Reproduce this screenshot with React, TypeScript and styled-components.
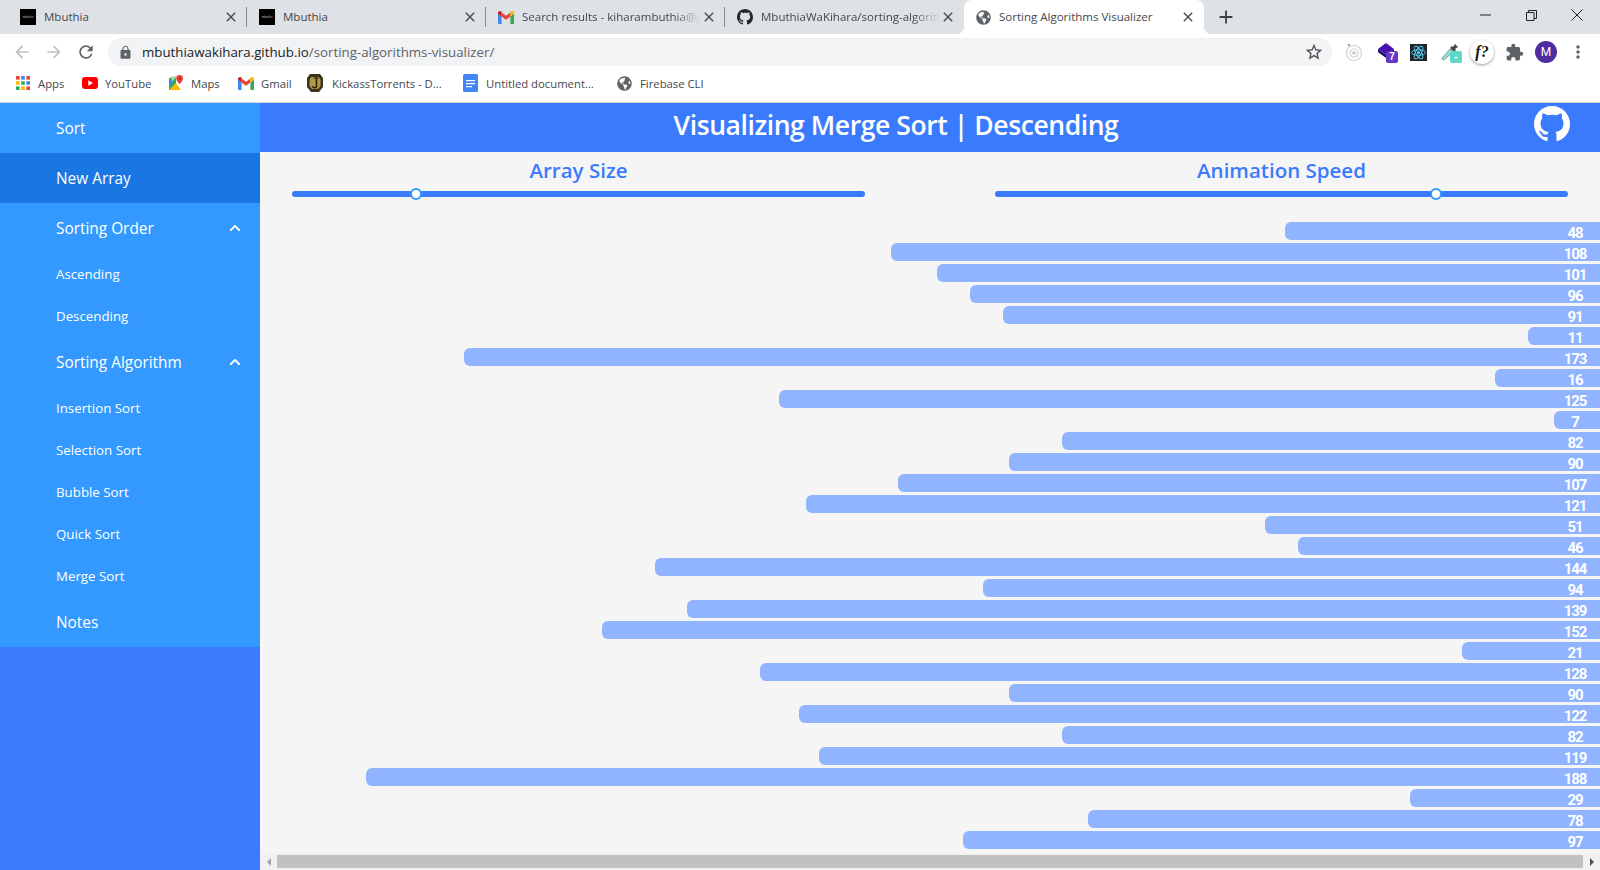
import React from 'react';
import styled, { createGlobalStyle } from 'styled-components';
import { MdArrowBack, MdArrowForward, MdRefresh, MdLock, MdClose, MdAdd, MdMoreVert, MdExtension, MdStarBorder } from 'react-icons/md';
import { FaGlobeAmericas, FaChevronUp } from 'react-icons/fa';

const GITHUB_PATH = 'M8 0C3.58 0 0 3.58 0 8c0 3.54 2.29 6.53 5.47 7.59.4.07.55-.17.55-.38 0-.19-.01-.82-.01-1.49-2.01.37-2.53-.49-2.69-.94-.09-.23-.48-.94-.82-1.13-.28-.15-.68-.52-.01-.53.63-.01 1.08.58 1.23.82.72 1.21 1.87.87 2.33.66.07-.52.28-.87.51-1.07-1.78-.2-3.64-.89-3.64-3.95 0-.87.31-1.59.82-2.15-.08-.2-.36-1.02.08-2.12 0 0 .67-.21 2.2.82.64-.18 1.32-.27 2-.27.68 0 1.36.09 2 .27 1.53-1.04 2.2-.82 2.2-.82.44 1.1.16 1.92.08 2.12.51.56.82 1.27.82 2.15 0 3.07-1.87 3.75-3.65 3.95.29.25.54.73.54 1.48 0 1.07-.01 1.93-.01 2.2 0 .21.15.46.55.38A8.013 8.013 0 0016 8c0-4.42-3.58-8-8-8z';

const UI_FONT = '"Open Sans", "Noto Sans", sans-serif';

const Global = createGlobalStyle`
  html, body { margin: 0; padding: 0; height: 100%; overflow: hidden; background: #fff; }
  * { box-sizing: border-box; }
  #root { height: 870px; width: 1600px; }
`;

const Page = styled.div`
  width: 1600px;
  height: 870px;
  display: flex;
  flex-direction: column;
  overflow: hidden;
  font-family: ${UI_FONT};
`;

/* ---------- browser chrome ---------- */
const TabStrip = styled.div`
  height: 34px;
  flex: none;
  background: #dee1e6;
  display: flex;
  align-items: stretch;
  padding-left: 8px;
`;
const Tab = styled.div<{ $active?: boolean; $w?: number }>`
  position: relative;
  width: ${p => p.$w ?? 239}px;
  display: flex;
  align-items: center;
  padding: 0 8px 0 12px;
  background: ${p => (p.$active ? '#fff' : 'transparent')};
  border-radius: ${p => (p.$active ? '8px 8px 0 0' : '0')};
  ${p =>
    p.$active
      ? `
    &::before, &::after {
      content: '';
      position: absolute;
      bottom: 0;
      width: 8px;
      height: 8px;
    }
    &::before { left: -8px; background: radial-gradient(circle at 0 0, transparent 8px, #fff 8.5px); }
    &::after { right: -8px; background: radial-gradient(circle at 100% 0, transparent 8px, #fff 8.5px); }
  `
      : ''}
`;
const TabDivider = styled.span`
  position: absolute;
  right: 0;
  top: 7px;
  bottom: 7px;
  width: 1px;
  background: #888a8e;
`;
const TabTitle = styled.span<{ $fade?: boolean }>`
  flex: 1;
  min-width: 0;
  margin: 0 0 2px 8px;
  font-size: 11.5px;
  color: #45474a;
  white-space: nowrap;
  overflow: hidden;
  ${p => (p.$fade ? 'mask-image: linear-gradient(to right, #000 85%, transparent 100%);' : '')}
`;
const TabClose = styled.span`
  width: 16px;
  height: 16px;
  flex: none;
  display: flex;
  align-items: center;
  justify-content: center;
  color: #45474a;
  font-size: 16px;
`;
const BlackFavicon = styled.span`
  width: 16px;
  height: 16px;
  flex: none;
  background: #000;
  color: #bbb;
  font: 3px/16px "Liberation Sans", sans-serif;
  text-align: center;
  overflow: hidden;
`;
const NewTab = styled.span`
  width: 22px;
  margin-left: 11px;
  display: flex;
  align-items: center;
  justify-content: center;
  color: #3c4043;
  font-size: 22px;
`;
const WindowControls = styled.div`
  margin-left: auto;
  display: flex;
  align-items: flex-start;
  color: #222;
`;
const WindowButton = styled.span`
  width: 46px;
  height: 30px;
  display: flex;
  align-items: center;
  justify-content: center;
`;

const Toolbar = styled.div`
  height: 34px;
  flex: none;
  padding: 4px 6px 0 0;
  display: flex;
  align-items: flex-start;
  background: #fff;
`;
const NavGroup = styled.div`
  width: 108px;
  height: 28px;
  flex: none;
  padding-left: 6px;
  display: flex;
  align-items: center;
`;
const NavButton = styled.span<{ $dim?: boolean }>`
  width: 32px;
  display: flex;
  align-items: center;
  justify-content: center;
  font-size: 20px;
  color: ${p => (p.$dim ? '#bfc1c3' : '#5f6368')};
`;
const Omnibox = styled.div`
  width: 1224px;
  height: 28px;
  flex: none;
  border-radius: 14px;
  background: #f1f3f4;
  display: flex;
  align-items: center;
  padding: 0 7px 0 10px;
`;
const LockSlot = styled.span`
  width: 24px;
  flex: none;
  color: #5f6368;
  font-size: 15px;
  display: flex;
  align-items: center;
`;
const Url = styled.span`
  flex: 1;
  font-size: 13.3px;
  color: #5f6368;
  white-space: nowrap;
`;
const UrlHost = styled.span`
  color: #202124;
`;
const StarSlot = styled.span`
  width: 22px;
  color: #4d5054;
  font-size: 20px;
  display: flex;
  align-items: center;
  justify-content: center;
`;
const Extensions = styled.div`
  margin-left: auto;
  display: flex;
  height: 28px;
`;
const ExtSlot = styled.span`
  position: relative;
  width: 32px;
  height: 28px;
  display: flex;
  align-items: center;
  justify-content: center;
  color: #5f6368;
`;
const ExtBadge = styled.span<{ $bg: string }>`
  position: absolute;
  left: 16px;
  top: 13px;
  width: 12px;
  height: 12px;
  border-radius: 2px;
  background: ${p => p.$bg};
  color: #fff;
  font: bold 10px/12px "Liberation Sans", sans-serif;
  text-align: center;
`;
const FunctionBubble = styled.span`
  width: 24px;
  height: 24px;
  border-radius: 50%;
  background: #fff;
  box-shadow: 0 1px 3px rgba(0, 0, 0, 0.4);
  color: #111;
  font: italic bold 16px/24px "Liberation Serif", serif;
  text-align: center;
`;
const Avatar = styled.span`
  width: 22px;
  height: 22px;
  border-radius: 50%;
  background: #4f2ca0;
  color: #fff;
  font: 12px/22px "Roboto", sans-serif;
  text-align: center;
`;

const BookmarkBar = styled.div`
  height: 35px;
  flex: none;
  display: flex;
  align-items: center;
  padding: 0 0 4px 15px;
  background: #fff;
  border-bottom: 1px solid #d3d5d8;
`;
const Bookmark = styled.span<{ $w: number; $gap?: number }>`
  width: ${p => p.$w}px;
  flex: none;
  display: flex;
  align-items: center;
  gap: ${p => p.$gap ?? 7}px;
  font-size: 11.3px;
  color: #45474a;
  white-space: nowrap;
`;
const BookmarkIcon = styled.span`
  width: 16px;
  height: 16px;
  flex: none;
  display: flex;
  align-items: center;
  justify-content: center;
  color: #5f6368;
`;

/* ---------- application ---------- */
const App_ = styled.div`
  flex: 1;
  min-height: 0;
  display: flex;
`;
const Sidebar = styled.nav`
  width: 260px;
  flex: none;
  background: #3a7bfd;
`;
const Menu = styled.div`
  background: #3399ff;
`;
const MenuItem = styled.div<{ $active?: boolean }>`
  height: 50px;
  padding: 0 19px 0 56px;
  display: flex;
  align-items: center;
  justify-content: space-between;
  font-size: 15.4px;
  color: #fff;
  background: ${p => (p.$active ? '#1976e2' : 'transparent')};
`;
const SubItem = styled.div`
  height: 42px;
  padding-left: 56px;
  display: flex;
  align-items: center;
  font-size: 13.3px;
  color: #fff;
`;
const Chevron = styled.span`
  color: #fff;
  font-size: 12px;
  display: flex;
  align-items: center;
`;
const Main = styled.main`
  flex: 1;
  min-width: 0;
  display: flex;
  flex-direction: column;
  background: #f5f5f5;
`;
const Header = styled.header`
  position: relative;
  height: 49px;
  flex: none;
  background: #3a7bfd;
  display: flex;
  align-items: center;
  justify-content: center;
  padding-right: 68px;
`;
const Title = styled.h1`
  margin: 0 0 5px;
  font-size: 26.5px;
  font-weight: 600;
  letter-spacing: -0.42px;
  color: #fff;
`;
const GithubLink = styled.span`
  position: absolute;
  right: 30px;
  top: 3px;
  color: #fff;
  display: flex;
`;
const Controls = styled.section`
  height: 70px;
  flex: none;
  padding: 0 32px;
  display: grid;
  grid-template-columns: 573px 573px;
  justify-content: space-between;
`;
const Control = styled.div`
  display: flex;
  flex-direction: column;
  align-items: center;
`;
const ControlLabel = styled.div`
  height: 39px;
  line-height: 37px;
  font-size: 20.5px;
  font-weight: 600;
  color: #3a7bfd;
`;
const Track = styled.div`
  position: relative;
  width: 100%;
  height: 6px;
  border-radius: 3px;
  background: #3a7bfd;
`;
const Thumb = styled.span`
  position: absolute;
  top: -3px;
  width: 12px;
  height: 12px;
  margin-left: -6px;
  border-radius: 50%;
  background: #fff;
  border: 2.5px solid #3399ff;
`;
const BarList = styled.div`
  flex: 1;
  min-height: 0;
  overflow: hidden;
  display: flex;
  flex-direction: column;
  align-items: flex-end;
  gap: 3.03px;
`;
const Bar = styled.div`
  height: 18px;
  flex: none;
  background: #90b4ff;
  border-radius: 6px 0 0 6px;
  display: flex;
  justify-content: flex-end;
`;
const BarValue = styled.span`
  width: 50px;
  flex: none;
  text-align: center;
  font: bold 15px/22px "Roboto", sans-serif;
  letter-spacing: -1.1px;
  color: #fff;
`;
const ScrollBar = styled.div`
  height: 17px;
  flex: none;
  background: #f1f1f1;
  display: flex;
  align-items: center;
`;
const ScrollArrow = styled.span<{ $dir: 'left' | 'right'; $color: string }>`
  width: 17px;
  flex: none;
  display: flex;
  justify-content: center;
  &::before {
    content: '';
    border-style: solid;
    border-width: 4px 4px;
    border-color: transparent;
    ${p => (p.$dir === 'left' ? `border-right-color: ${p.$color}; margin-right: 4px;` : `border-left-color: ${p.$color}; margin-left: 4px;`)}
  }
`;
const ScrollThumb = styled.span`
  flex: 1;
  height: 13px;
  background: #c1c1c1;
`;

/* ---------- icons ---------- */
const GithubMark = ({ size, color = 'currentColor' }: { size: number; color?: string }) => (
  <svg width={size} height={size} viewBox="0 0 16 16" fill={color}><path d={GITHUB_PATH} /></svg>
);
const GmailIcon = () => (
  <svg width="16" height="13" viewBox="0 0 16 13">
    <path d="M0 2v10a1 1 0 0 0 1 1h2.6V5.5z" fill="#4285f4" />
    <path d="M16 2v10a1 1 0 0 1-1 1h-2.6V5.5z" fill="#34a853" />
    <path d="M3.6 5.5V1.4L8 4.7l4.4-3.3v4.1L8 8.8z" fill="#ea4335" />
    <path d="M0 2c0-1.7 2-2.6 3.3-1.6l.3.2v4.9L0 2.8z" fill="#c5221f" />
    <path d="M16 2c0-1.7-2-2.6-3.3-1.6l-.3.2v4.9L16 2.8z" fill="#fbbc04" />
  </svg>
);
const AppsIcon = () => (
  <svg width="14" height="14" viewBox="0 0 14 14">
    {['#ea4335', '#4285f4', '#ea4335', '#fbbc04', '#34a853', '#4285f4', '#34a853', '#fbbc04', '#ea4335'].map((c, i) => (
      <rect key={i} x={(i % 3) * 5.2} y={Math.floor(i / 3) * 5.2} width="3.6" height="3.6" fill={c} />
    ))}
  </svg>
);
const YouTubeIcon = () => (
  <svg width="16" height="12" viewBox="0 0 16 12">
    <rect width="16" height="12" rx="3" fill="#f00" />
    <path d="M6.3 3.2v5.6L11 6z" fill="#fff" />
  </svg>
);
const MapsIcon = () => (
  <svg width="16" height="16" viewBox="0 0 16 16">
    <path d="M1 3l7-1.5v13L1 15z" fill="#34a853" />
    <path d="M1 15l7-7 5 7z" fill="#fbbc04" />
    <path d="M1 3l4 4-4 4z" fill="#4285f4" />
    <path d="M3 1.5h6l-5 5z" fill="#a8dab5" />
    <path d="M11.6 0a3.4 3.4 0 0 0-3.4 3.4C8.2 6 11.6 9 11.6 9S15 6 15 3.4A3.4 3.4 0 0 0 11.6 0z" fill="#ea4335" />
    <circle cx="11.6" cy="3.4" r="1.2" fill="#a52714" />
  </svg>
);
const KickassIcon = () => (
  <svg width="16" height="18" viewBox="0 0 16 18">
    <path d="M3 0h10l3 4v9l-4 5H4l-4-5V4z" fill="#3a3418" />
    <path d="M4 3h8l1.5 3v6L11 15H5l-2.5-3V6z" fill="#b09a4a" />
    <path d="M9.5 4v7.5a2 2 0 0 1-4 .5" stroke="#2a240c" strokeWidth="1.6" fill="none" />
    <path d="M6.5 4h5" stroke="#2a240c" strokeWidth="1.2" />
  </svg>
);
const DocsIcon = () => (
  <svg width="15" height="18" viewBox="0 0 15 18">
    <rect width="15" height="18" rx="1.5" fill="#4285f4" />
    <path d="M3 6h9v1.3H3zM3 9h9v1.3H3zM3 12h6v1.3H3z" fill="#fff" />
  </svg>
);
const RestoreIcon = () => (
  <svg width="11" height="11" viewBox="0 0 11 11" fill="none" stroke="#222">
    <path d="M.5 2.5h7.5v8H.5zM2.5 2.5v-2h8v8h-2.5" />
  </svg>
);
const ThinX = () => (
  <svg width="12" height="12" viewBox="0 0 12 12" stroke="#222" fill="none"><path d="M.5.5l11 11M11.5.5l-11 11" /></svg>
);
const MinLine = () => (
  <svg width="11" height="2" viewBox="0 0 11 2"><path d="M0 1h11" stroke="#222" /></svg>
);
const RadarExt = () => (
  <svg width="18" height="20" viewBox="0 0 18 20" fill="none" stroke="#cfd1d3" strokeWidth="1.2">
    <circle cx="9" cy="11" r="7.5" />
    <circle cx="9" cy="11" r="4" />
    <circle cx="9" cy="11" r="1.3" fill="#cfd1d3" />
    <circle cx="4" cy="3" r="1.2" fill="#a0a0a0" stroke="none" />
  </svg>
);
const StackExt = () => (
  <svg width="16" height="18" viewBox="0 0 16 18">
    <path d="M8 0l8 6-8 6-8-6z" fill="#4a12b0" />
    <path d="M0 6l8 6 8-6v3l-8 6-8-6z" fill="#1b0a6c" />
  </svg>
);
const ReactExt = () => (
  <svg width="17" height="17" viewBox="0 0 17 17">
    <rect width="17" height="17" fill="#20232a" />
    <g fill="none" stroke="#61dafb" strokeWidth="0.9">
      <ellipse cx="8.5" cy="8.5" rx="7" ry="2.8" />
      <ellipse cx="8.5" cy="8.5" rx="7" ry="2.8" transform="rotate(60 8.5 8.5)" />
      <ellipse cx="8.5" cy="8.5" rx="7" ry="2.8" transform="rotate(120 8.5 8.5)" />
    </g>
    <circle cx="8.5" cy="8.5" r="1.5" fill="#61dafb" />
  </svg>
);
const DropperExt = () => (
  <svg width="18" height="18" viewBox="0 0 18 18">
    <path d="M9 6l3 3-8 7-2 1-1-1 1-2z" fill="#8fe0d4" stroke="#777" strokeWidth="0.7" />
    <path d="M9 5l2-2 1 1 2-3 3 3-3 2 1 1-2 2z" fill="#44474a" />
  </svg>
);

/* ---------- data ---------- */
const VALUES = [48, 108, 101, 96, 91, 11, 173, 16, 125, 7, 82, 90, 107, 121, 51, 46, 144, 94, 139, 152, 21, 128, 90, 122, 82, 119, 188, 29, 78, 97];
const PX_PER_UNIT = 6.565;
const TAB_ICON = 16;

export default function App() {
  return (
    <Page>
      <Global />
      <TabStrip>
        <Tab>
          <BlackFavicon>mbuthia</BlackFavicon>
          <TabTitle>Mbuthia</TabTitle>
          <TabClose><MdClose /></TabClose>
          <TabDivider />
        </Tab>
        <Tab>
          <BlackFavicon>mbuthia</BlackFavicon>
          <TabTitle>Mbuthia</TabTitle>
          <TabClose><MdClose /></TabClose>
          <TabDivider />
        </Tab>
        <Tab>
          <GmailIcon />
          <TabTitle $fade>Search results - kiharambuthia@gmail.com</TabTitle>
          <TabClose><MdClose /></TabClose>
          <TabDivider />
        </Tab>
        <Tab>
          <GithubMark size={TAB_ICON} color="#24292e" />
          <TabTitle $fade>MbuthiaWaKihara/sorting-algorithms-visualizer</TabTitle>
          <TabClose><MdClose /></TabClose>
        </Tab>
        <Tab $active $w={240}>
          <FaGlobeAmericas size={15} color="#5f6368" />
          <TabTitle>Sorting Algorithms Visualizer</TabTitle>
          <TabClose><MdClose /></TabClose>
        </Tab>
        <NewTab><MdAdd /></NewTab>
        <WindowControls>
          <WindowButton><MinLine /></WindowButton>
          <WindowButton><RestoreIcon /></WindowButton>
          <WindowButton><ThinX /></WindowButton>
        </WindowControls>
      </TabStrip>

      <Toolbar>
        <NavGroup>
          <NavButton $dim><MdArrowBack /></NavButton>
          <NavButton $dim><MdArrowForward /></NavButton>
          <NavButton><MdRefresh /></NavButton>
        </NavGroup>
        <Omnibox>
          <LockSlot><MdLock /></LockSlot>
          <Url><UrlHost>mbuthiawakihara.github.io</UrlHost>/sorting-algorithms-visualizer/</Url>
          <StarSlot><MdStarBorder /></StarSlot>
        </Omnibox>
        <Extensions>
          <ExtSlot><RadarExt /></ExtSlot>
          <ExtSlot><StackExt /><ExtBadge $bg="#6a35c9">7</ExtBadge></ExtSlot>
          <ExtSlot><ReactExt /></ExtSlot>
          <ExtSlot><DropperExt /><ExtBadge $bg="#5fd8c8">-</ExtBadge></ExtSlot>
          <ExtSlot><FunctionBubble>f?</FunctionBubble></ExtSlot>
          <ExtSlot><MdExtension size={19} /></ExtSlot>
          <ExtSlot><Avatar>M</Avatar></ExtSlot>
          <ExtSlot><MdMoreVert size={20} /></ExtSlot>
        </Extensions>
      </Toolbar>

      <BookmarkBar>
        <Bookmark $w={67}><BookmarkIcon><AppsIcon /></BookmarkIcon>Apps</Bookmark>
        <Bookmark $w={86}><BookmarkIcon><YouTubeIcon /></BookmarkIcon>YouTube</Bookmark>
        <Bookmark $w={70}><BookmarkIcon><MapsIcon /></BookmarkIcon>Maps</Bookmark>
        <Bookmark $w={69}><BookmarkIcon><GmailIcon /></BookmarkIcon>Gmail</Bookmark>
        <Bookmark $w={155} $gap={9}><BookmarkIcon><KickassIcon /></BookmarkIcon>KickassTorrents - D...</Bookmark>
        <Bookmark $w={154} $gap={8}><BookmarkIcon><DocsIcon /></BookmarkIcon>Untitled document...</Bookmark>
        <Bookmark $w={120} $gap={8}><BookmarkIcon><FaGlobeAmericas size={15} /></BookmarkIcon>Firebase CLI</Bookmark>
      </BookmarkBar>

      <App_>
        <Sidebar>
          <Menu>
            <MenuItem>Sort</MenuItem>
            <MenuItem $active>New Array</MenuItem>
            <MenuItem>Sorting Order<Chevron><FaChevronUp /></Chevron></MenuItem>
            <SubItem>Ascending</SubItem>
            <SubItem>Descending</SubItem>
            <MenuItem>Sorting Algorithm<Chevron><FaChevronUp /></Chevron></MenuItem>
            <SubItem>Insertion Sort</SubItem>
            <SubItem>Selection Sort</SubItem>
            <SubItem>Bubble Sort</SubItem>
            <SubItem>Quick Sort</SubItem>
            <SubItem>Merge Sort</SubItem>
            <MenuItem>Notes</MenuItem>
          </Menu>
        </Sidebar>
        <Main>
          <Header>
            <Title>Visualizing Merge Sort | Descending</Title>
            <GithubLink><GithubMark size={36} /></GithubLink>
          </Header>
          <Controls>
            <Control>
              <ControlLabel>Array Size</ControlLabel>
              <Track><Thumb style={{ left: `${(124 / 573) * 100}%` }} /></Track>
            </Control>
            <Control>
              <ControlLabel>Animation Speed</ControlLabel>
              <Track><Thumb style={{ left: `${(441 / 573) * 100}%` }} /></Track>
            </Control>
          </Controls>
          <BarList>
            {VALUES.map((v, i) => (
              <Bar key={i} style={{ width: `${v * PX_PER_UNIT}px` }}>
                <BarValue>{v}</BarValue>
              </Bar>
            ))}
          </BarList>
          <ScrollBar>
            <ScrollArrow $dir="left" $color="#a3a3a3" />
            <ScrollThumb />
            <ScrollArrow $dir="right" $color="#505050" />
          </ScrollBar>
        </Main>
      </App_>
    </Page>
  );
}
